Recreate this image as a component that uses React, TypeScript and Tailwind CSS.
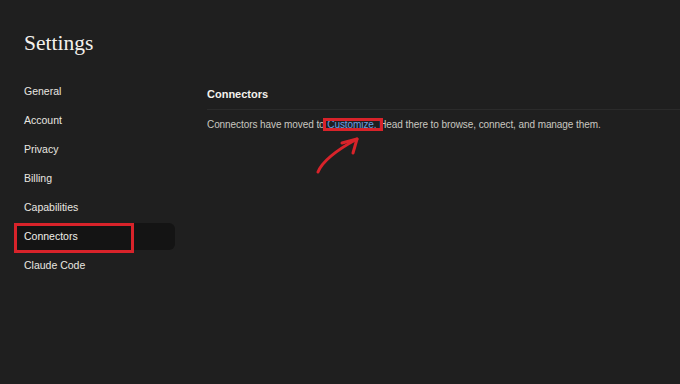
import React from "react";

const navItems = ["General", "Account", "Privacy", "Billing", "Capabilities", "Connectors", "Claude Code"];

export default function App() {
  return (
    <div
      className="relative flex h-[384px] w-[680px] overflow-hidden bg-[#1f1f1f] text-[#ebe9e3]"
      style={{ fontFamily: '"Liberation Sans", Arial, sans-serif' }}
    >
      <aside className="w-[175px] shrink-0 pl-[14px]">
        <h1
          className="mt-[29px] h-[28px] px-[10px] text-[21.5px] leading-[28px] text-[#f3f1ec]"
          style={{ fontFamily: '"Liberation Serif", "DejaVu Serif", serif' }}
        >
          Settings
        </h1>
        <nav className="mt-[21px] flex flex-col gap-[2px]">
          {navItems.map((item) => {
            const active = item === "Connectors";
            return (
              <div
                key={item}
                className={
                  active
                    ? "relative flex h-[27px] items-center rounded-[6px] bg-[#141414] px-[10px] text-[10.5px] text-[#f1efe9]"
                    : "relative flex h-[27px] items-center rounded-[6px] px-[10px] text-[10.5px] text-[#e9e7e1]"
                }
              >
                {item}
                {active && (
                  <span className="pointer-events-none absolute bottom-[-3px] left-0 top-0 w-[120px] border-[3px] border-[#d8232a]" />
                )}
              </div>
            );
          })}
        </nav>
      </aside>
      <main className="flex-1 pl-[32px] pt-[84px]">
        <div className="border-b border-[#2b2b2b] pb-[5px]">
          <h2 className="text-[11px] font-bold leading-[20px] text-[#f3f1ec]">Connectors</h2>
        </div>
        <p className="mt-[6px] text-[10px] leading-[18px] tracking-[-0.08px] text-[#c9c7c0]">
          Connectors have moved to{" "}
          <span className="relative text-[#6b9fe3]">
            Customize.
            <span className="pointer-events-none absolute bottom-[-1px] left-[-4px] right-[-6px] top-[-1px] border-[3px] border-[#d8232a]" />
          </span>{" "}
          Head there to browse, connect, and manage them.
        </p>
      </main>
      <svg
        className="pointer-events-none absolute left-0 top-0"
        width="680"
        height="384"
        viewBox="0 0 680 384"
        fill="none"
      >
        <path
          d="M318 172 C 322 162, 335 151, 357 139"
          stroke="#d8232a"
          strokeWidth="3"
          strokeLinecap="round"
        />
        <path
          d="M342 143 L357 139 L353 153"
          stroke="#d8232a"
          strokeWidth="3"
          strokeLinecap="round"
          strokeLinejoin="round"
        />
      </svg>
    </div>
  );
}
